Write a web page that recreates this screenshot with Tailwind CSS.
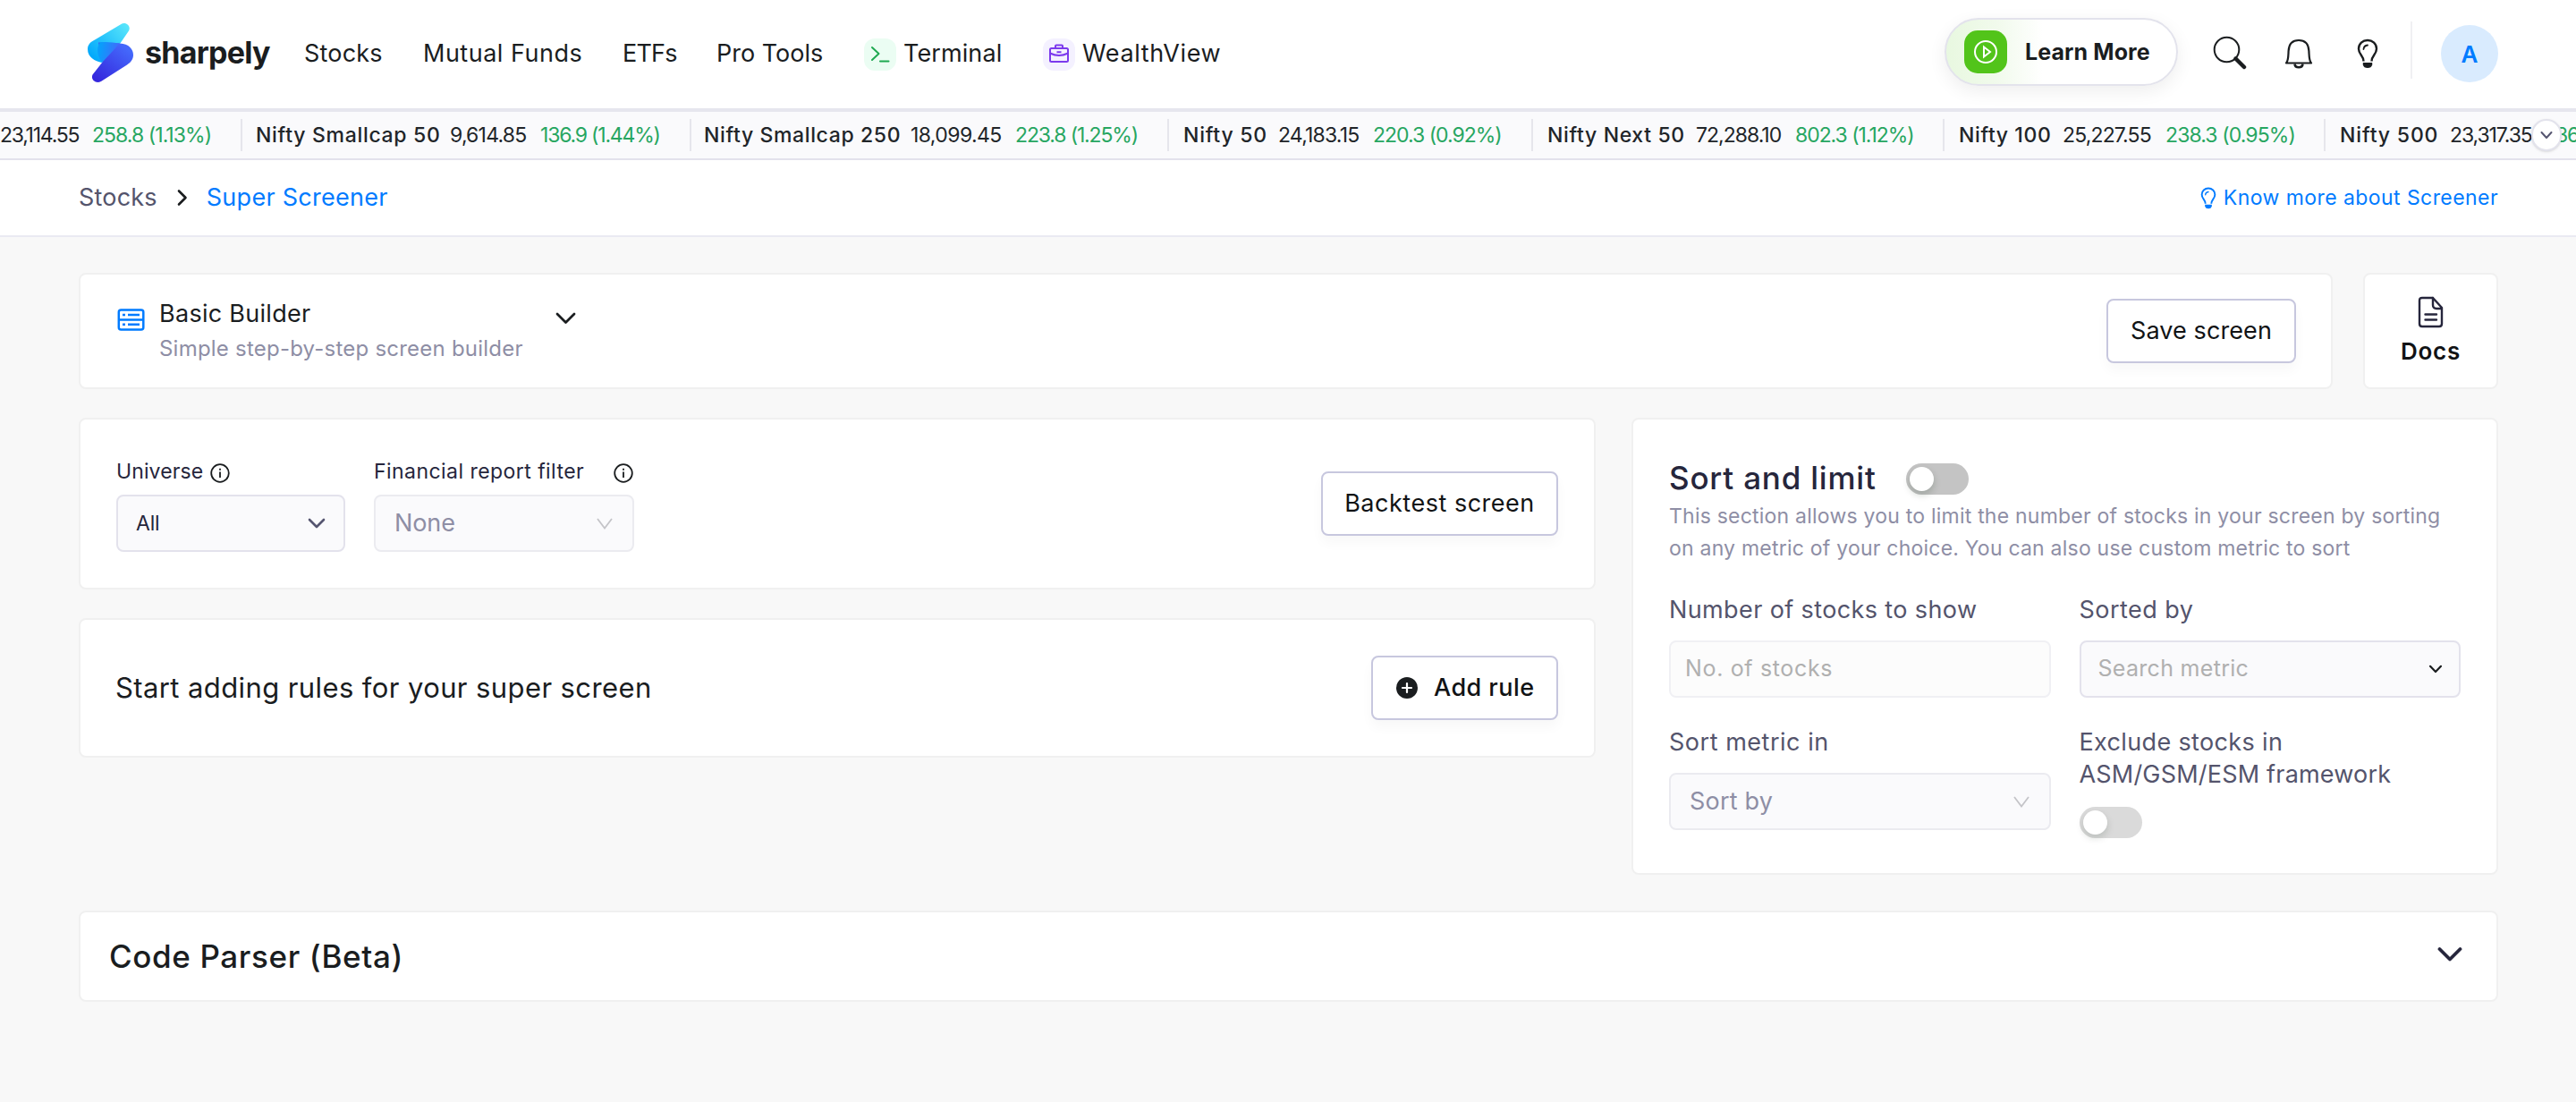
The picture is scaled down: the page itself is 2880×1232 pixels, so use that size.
<!DOCTYPE html>
<html lang="en">

<head>
    <meta charset="UTF-8">
    <meta name="viewport" content="width=device-width, initial-scale=1.0">
    <title>Super Screener - sharpely</title>
    <script src="https://cdn.jsdelivr.net/npm/@tailwindcss/browser@4"></script>
</head>

<body class="bg-[#f8f8f8] font-['Inter','DejaVu_Sans',sans-serif] text-[#1a1d1f] whitespace-nowrap overflow-x-hidden min-h-screen">

    <!-- Navbar -->
    <header class="h-[121px] bg-white flex items-center justify-between pl-[98px] pr-[87px]">
        <div class="flex items-center h-[119px] text-[27px]">
            <a class="flex items-center w-[242px]">
                <svg class="w-[52px] h-[68px] mb-[4px]" viewBox="0 0 52 68" fill="none">
                    <defs>
                        <linearGradient id="top" x1="42" y1="3" x2="5" y2="38" gradientUnits="userSpaceOnUse">
                            <stop stop-color="#56e4fb" />
                            <stop offset="1" stop-color="#03a9fb" />
                        </linearGradient>
                        <linearGradient id="bottom" x1="42" y1="28" x2="12" y2="66" gradientUnits="userSpaceOnUse">
                            <stop stop-color="#4468fb" />
                            <stop offset="1" stop-color="#3527dd" />
                        </linearGradient>
                        <linearGradient id="fold" x1="14" y1="30" x2="36" y2="34" gradientUnits="userSpaceOnUse">
                            <stop stop-color="#0a9dfb" />
                            <stop offset="1" stop-color="#4666fb" />
                        </linearGradient>
                    </defs>
                    <path d="M37 2.2C42-1.5 49 3.5 46 9.500L36 24L16 45C8 43.500 0 39 0 30C0 25 3 22 8 19.500Z" fill="url(#top)" />
                    <path d="M12 22.500L36 23.500C46 24 51 30 51 36.500C51 41 48.500 44.500 44 47.500L15 66C9 69 3 64 5.500 58.500L16.500 44.500Z" fill="url(#bottom)" />
                    <path d="M14 22.300C22 21.500 28 22.500 36 23.500L16.500 44.500C11 40 9 28 14 22.300Z" fill="url(#fold)" />
                </svg>
                <span class="text-[34px] font-bold tracking-[-0.75px] ml-[12px] mb-[4px]">sharpely</span>
            </a>
            <a class="w-[133px] tracking-[0.2px]">Stocks</a>
            <a class="w-[223px] tracking-[0.5px]">Mutual Funds</a>
            <a class="w-[105px] tracking-[-0.8px]">ETFs</a>
            <a class="w-[165px] tracking-[0px]">Pro Tools</a>
            <a class="w-[200px] flex items-center tracking-[0.1px]">
                <svg class="w-[36px] h-[36px] mr-[8px] rounded-[12px] bg-[#ebfdf3]" viewBox="0 0 36 36" fill="none" stroke="#1fa951" stroke-width="2" stroke-linecap="round" stroke-linejoin="round">
                    <path d="M9 10l7.500 7L9 24M18 25.500h9.500" />
                </svg>
                Terminal
            </a>
            <a class="flex items-center tracking-[0.6px]">
                <svg class="w-[36px] h-[36px] mr-[8px] rounded-[12px] bg-[#f4f1ff]" viewBox="0 0 36 36" fill="none" stroke="#7c3aed" stroke-width="2" stroke-linejoin="round">
                    <rect x="8" y="11" width="20" height="15" rx="1.500" />
                    <path d="M14 11V8.500q0-1 1-1h6q1 0 1 1V11M8 16.500q10 5 20 0" />
                    <path d="M15.500 15.200h5" />
                </svg>
                WealthView
            </a>
        </div>

        <div class="flex items-center h-[121px]">
            <button class="w-[261px] h-[76px] mb-[5px] rounded-full border-2 border-[#e3e3ec] bg-[linear-gradient(90deg,#e8f8e0_0%,#f1faec_22%,#ffffff_42%)] shadow-[0_6px_20px_rgba(0,0,0,0.07)] flex items-center pl-[20px]">
                <svg class="w-[48px] h-[48px] rounded-[15px] bg-[#52c41a]" viewBox="0 0 48 48" fill="none" stroke="#fff" stroke-width="2">
                    <circle cx="24" cy="24" r="12" />
                    <path d="M22 18.500v11l7-5.500z" />
                </svg>
                <span class="text-[25px] font-bold ml-[20px] mt-[2px] tracking-[0.1px]">Learn More</span>
            </button>
            <svg class="w-[38px] h-[38px] ml-[39px] mb-[4px]" viewBox="0 0 38 38" fill="none" stroke="#1a1d1f">
                <circle cx="15.500" cy="15.500" r="13.800" stroke-width="2" />
                <path d="M25.500 25.500l9.500 9.500" stroke-width="4.500" stroke-linecap="round" />
            </svg>
            <svg class="w-[32px] h-[34px] ml-[42px] mb-[1px]" viewBox="0 0 32 34" fill="none" stroke="#1a1d1f" stroke-width="2.200" stroke-linejoin="round">
                <path d="M2 27.500C4.500 25 4.300 20 4.600 14C5 6.500 9 2 16 2S27 6.500 27.400 14C27.700 20 27.500 25 30 27.500Z" />
                <path d="M11.500 28.500C12 33.500 20 33.500 20.500 28.500" stroke-width="2.600" />
            </svg>
            <svg class="w-[24px] h-[34px] ml-[49px] mb-[1px]" viewBox="0 0 24 34" fill="none" stroke="#1a1d1f" stroke-width="2.400">
                <path d="M7.500 25.500C7.500 19 2 18 2 11.500C2 6 6.500 2 12 2S22 6 22 11.500C22 18 16.500 19 16.500 25.500" />
                <path d="M7.500 12Q7.800 8 12 7.500" stroke-width="1.800" stroke-linecap="round" />
                <path d="M6.800 27h10.400v2.500q-1 3.500-5.200 3.500t-5.200-3.500z" fill="#1a1d1f" stroke="none" />
            </svg>
            <div class="w-[2px] h-[64px] bg-[#f0f0f3] ml-[36px] mb-[9px]"></div>
            <div class="w-[64px] h-[64px] rounded-full bg-[#d9ebfe] text-[#007bff] text-[26px] font-semibold flex items-center justify-center ml-[32px] mb-[1px]">A</div>
        </div>
    </header>

    <!-- Index ticker -->
    <div class="relative h-[58px] bg-[#fafafc] border-t-4 border-b-2 border-t-[#e6e6ee] border-b-[#e3e2ec] flex items-center overflow-hidden text-[23px] text-[#212529]">
        <div class="flex items-center h-[36px] w-[271px] shrink-0 border-r-2 border-[#e6e6ec]">
            <span class="w-[103px] tracking-[-1.25px]">23,114.55</span>
            <span class="text-[#27a661] tracking-[-0.95px]">258.8 (1.13%)</span>
        </div>
        <div class="flex items-center h-[36px] w-[502px] shrink-0 border-r-2 border-[#e6e6ec] pl-[15px]">
            <span class="w-[217px] font-medium tracking-[0.7px]">Nifty Smallcap 50</span>
            <span class="w-[101px] tracking-[-0.8px]">9,614.85</span>
            <span class="text-[#27a661] tracking-[-1.2px]">136.9 (1.44%)</span>
        </div>
        <div class="flex items-center h-[36px] w-[534px] shrink-0 border-r-2 border-[#e6e6ec] pl-[14px]">
            <span class="w-[231px] font-medium tracking-[0.63px]">Nifty Smallcap 250</span>
            <span class="w-[117px] tracking-[-0.6px]">18,099.45</span>
            <span class="text-[#27a661] tracking-[-1.15px]">223.8 (1.25%)</span>
        </div>
        <div class="flex items-center h-[36px] w-[407px] shrink-0 border-r-2 border-[#e6e6ec] pl-[16px]">
            <span class="w-[106px] font-medium tracking-[0.75px]">Nifty 50</span>
            <span class="w-[106px] tracking-[-0.8px]">24,183.15</span>
            <span class="text-[#27a661] tracking-[-1px]">220.3 (0.92%)</span>
        </div>
        <div class="flex items-center h-[36px] w-[460px] shrink-0 border-r-2 border-[#e6e6ec] pl-[16px]">
            <span class="w-[166px] font-medium tracking-[0.65px]">Nifty Next 50</span>
            <span class="w-[111px] tracking-[-1px]">72,288.10</span>
            <span class="text-[#27a661] tracking-[-1.05px]">802.3 (1.12%)</span>
        </div>
        <div class="flex items-center h-[36px] w-[426px] shrink-0 border-r-2 border-[#e6e6ec] pl-[16px]">
            <span class="w-[116px] font-medium tracking-[0.6px]">Nifty 100</span>
            <span class="w-[115px] tracking-[-0.85px]">25,227.55</span>
            <span class="text-[#27a661] tracking-[-0.9px]">238.3 (0.95%)</span>
        </div>
        <div class="flex items-center h-[36px] w-[430px] shrink-0 pl-[16px]">
            <span class="w-[123px] font-medium tracking-[0.85px]">Nifty 500</span>
            <span class="w-[105px] tracking-[-1.1px]">23,317.35</span>
            <span class="text-[#27a661] tracking-[-1.1px]">236.1 (1.02%)</span>
        </div>
        <button class="absolute top-[8px] right-[16px] w-[34px] h-[36px] rounded-full bg-white border-2 border-[#e3e3ec] shadow-sm flex items-center justify-center">
            <svg class="w-[14px] h-[10px]" viewBox="0 0 14 10" fill="none" stroke="#555570" stroke-width="2" stroke-linecap="round" stroke-linejoin="round">
                <path d="M1.500 2L7 8l5.500-6" />
            </svg>
        </button>
    </div>

    <!-- Breadcrumb -->
    <div class="h-[86px] bg-white border-b-2 border-[#eaeaf2] flex items-center justify-between pl-[88px] pr-[87px]">
        <div class="flex items-center text-[27px]">
            <span class="text-[#54546c] tracking-[0.2px]">Stocks</span>
            <svg class="w-[12px] h-[20px] ml-[22px] mr-[21px]" viewBox="0 0 12 20" fill="none" stroke="#1a1d1f" stroke-width="2.600" stroke-linecap="round" stroke-linejoin="round">
                <path d="M2 2.500L9.500 10L2 17.500" />
            </svg>
            <span class="text-[#007bff] tracking-[0.27px]">Super Screener</span>
        </div>
        <a class="flex items-center text-[23px] text-[#007bff] tracking-[0.43px]">
            <svg class="w-[18px] h-[25px] mr-[8px]" viewBox="0 0 24 34" fill="none" stroke="#007bff" stroke-width="2.600">
                <path d="M7.500 25.500C7.500 19 2 18 2 11.500C2 6 6.500 2 12 2S22 6 22 11.500C22 18 16.500 19 16.500 25.500" />
                <path d="M7.500 12Q7.800 8 12 7.500" stroke-width="1.800" stroke-linecap="round" />
                <path d="M6.800 27h10.400v2.500q-1 3.500-5.200 3.500t-5.200-3.500z" fill="#007bff" stroke="none" />
            </svg>
            Know more about Screener
        </a>
    </div>

    <main class="pl-[88px] pr-[87px] pt-[40px]">

        <!-- Builder type -->
        <div class="flex gap-[34px] h-[130px]">
            <div class="flex-1 bg-white border-2 border-[#f0f0f0] rounded-lg flex items-center justify-between pl-[41px] pr-[39px]">
                <div class="flex w-[520px] h-[90px]">
                    <svg class="w-[31px] h-[25px] mt-[20px]" viewBox="0 0 31 25" fill="none" stroke="#007bff" stroke-width="2.500">
                        <rect x="1.800" y="1.500" width="27.500" height="22" rx="2.500" />
                        <path d="M1.800 12.500h27.500M6 7h3M12 7h13M6 17.800h3M12 17.800h13" />
                    </svg>
                    <div class="ml-[16px] mt-[8px] w-[442px]">
                        <p class="text-[27px] leading-[36px] tracking-[0.28px] text-[#1a1d1f]">Basic Builder</p>
                        <p class="text-[24px] leading-[36px] mt-[3px] tracking-[0.22px] text-[#8e8ea5]">Simple step-by-step screen builder</p>
                    </div>
                    <svg class="w-[24px] h-[14px] mt-[24px] shrink-0" viewBox="0 0 24 14" fill="none" stroke="#1a1d1f" stroke-width="2.800" stroke-linecap="round" stroke-linejoin="round">
                        <path d="M3 2l9.500 9.500L22 2" />
                    </svg>
                </div>
                <button class="w-[212px] h-[72px] bg-white border-2 border-[#c7c7de] rounded-lg shadow-[0_8px_14px_rgba(0,0,0,0.03)] text-[27px] tracking-[0.1px] text-[#111315]">Save screen</button>
            </div>
            <div class="w-[151px] bg-white border-2 border-[#f0f0f0] rounded-lg flex flex-col items-center pt-[24px]">
                <svg class="w-[30px] h-[36px]" viewBox="0 0 30 36" fill="none" stroke="#26263c" stroke-width="2.400" stroke-linejoin="round" stroke-linecap="round">
                    <path d="M17 2H5q-3 0-3 3v26q0 3 3 3h19q3 0 3-3V13L17 2v8q0 4 4 4h6" />
                    <path d="M8.500 20.500h12.500M8.500 26.500h12.500" />
                </svg>
                <span class="text-[26px] leading-[36px] font-semibold tracking-[0.7px] mt-[8px] text-[#111315]">Docs</span>
            </div>
        </div>

        <div class="flex items-start gap-[40px] mt-[32px]">
            <div class="w-[1696px]">
                <!-- Universe and report filter -->
                <div class="h-[192px] bg-white border-2 border-[#f0f0f0] rounded-lg flex justify-between pl-[40px] pr-[40px]">
                    <div class="flex gap-[32px] pt-[41px]">
                        <div class="w-[256px]">
                            <div class="flex items-center h-[34px] text-[23px] text-[#26263c]">
                                <span class="tracking-[0.1px]">Universe</span>
                                <svg class="w-[22px] h-[22px] ml-[8px] mt-[4px]" viewBox="0 0 22 22" fill="none" stroke="#1a1d1f" stroke-width="1.800">
                                    <circle cx="11" cy="11" r="9.800" />
                                    <path d="M11 9.500v6.500M11 5.800v2" />
                                </svg>
                            </div>
                            <div class="h-[64px] mt-[9px] bg-[#fafafc] border-2 border-[#e3e2ec] rounded-lg flex items-center justify-between pl-[20px] pr-[20px] text-[23px] text-[#26263c]">
                                <span class="tracking-[-0.2px]">All</span>
                                <svg class="w-[20px] h-[12px]" viewBox="0 0 20 12" fill="none" stroke="#555570" stroke-width="2.600" stroke-linecap="round" stroke-linejoin="round">
                                    <path d="M2 2l8 8 8-8" />
                                </svg>
                            </div>
                        </div>
                        <div class="w-[291px]">
                            <div class="flex items-center justify-between h-[34px] text-[23px] text-[#26263c]">
                                <span class="tracking-[0.45px]">Financial report filter</span>
                                <svg class="w-[22px] h-[22px] mr-[1px] mt-[4px]" viewBox="0 0 22 22" fill="none" stroke="#1a1d1f" stroke-width="1.800">
                                    <circle cx="11" cy="11" r="9.800" />
                                    <path d="M11 9.500v6.500M11 5.800v2" />
                                </svg>
                            </div>
                            <div class="h-[64px] mt-[9px] bg-[#fafafc] border-2 border-[#ebebf0] rounded-lg flex items-center justify-between pl-[21px] pr-[22px] text-[27px] text-[#8e8ea5]">
                                <span class="tracking-[-0.1px]">None</span>
                                <svg class="w-[18px] h-[13px]" viewBox="0 0 18 13" fill="none" stroke="#c4c4c8" stroke-width="1.800">
                                    <path d="M1 1l8 10.500L17 1" />
                                </svg>
                            </div>
                        </div>
                    </div>
                    <button class="w-[265px] h-[72px] mt-[58px] bg-white border-2 border-[#c7c7de] rounded-lg shadow-[0_8px_14px_rgba(0,0,0,0.03)] text-[27px] tracking-[0.52px] text-[#111315]">Backtest screen</button>
                </div>

                <!-- Rules -->
                <div class="h-[156px] mt-[32px] bg-white border-2 border-[#f0f0f0] rounded-lg flex items-center justify-between pl-[39px] pr-[40px]">
                    <p class="text-[31px] tracking-[0.4px]">Start adding rules for your super screen</p>
                    <button class="w-[209px] h-[72px] bg-white border-2 border-[#c7c7de] rounded-lg shadow-[0_8px_14px_rgba(0,0,0,0.03)] flex items-center pl-[26px] text-[27px] font-medium tracking-[0.45px] text-[#111315]">
                        <svg class="w-[24px] h-[24px] mr-[18px]" viewBox="0 0 24 24" fill="none" stroke="#fff" stroke-width="2.200" stroke-linecap="round">
                            <circle cx="12" cy="12" r="12" fill="#1a1d1f" stroke="none" />
                            <path d="M12 7v10M7 12h10" />
                        </svg>
                        Add rule
                    </button>
                </div>
            </div>

            <!-- Sort and limit -->
            <div class="flex-1 h-[511px] bg-white border-2 border-[#f0f0f0] rounded-lg pl-[40px] pr-[40px] pt-[41px]">
                <div class="flex items-center h-[48px]">
                    <h2 class="text-[35px] font-medium tracking-[0.8px] text-[#26263c] w-[265px]">Sort and limit</h2>
                    <div class="w-[70px] h-[35px] mt-[2px] rounded-full bg-[#c4c4c4] p-[4px]">
                        <div class="w-[27px] h-[27px] rounded-full bg-white shadow-[0_4px_8px_rgba(0,35,11,0.2)]"></div>
                    </div>
                </div>
                <p class="text-[23px] leading-[36px] tracking-[0.22px] text-[#8e8ea5] mt-[1px]">This section allows you to limit the number of stocks in your screen by sorting<br>on any metric of your choice. You can also use custom metric to sort</p>
                <div class="grid grid-cols-2 gap-x-[32px] mt-[33px] text-[27px] text-[#54546c]">
                    <div class="h-[148px]">
                        <p class="leading-[36px] tracking-[0.38px]">Number of stocks to show</p>
                        <div class="h-[64px] mt-[16px] bg-[#fcfcfc] border-2 border-[#f0f0f4] rounded-lg flex items-center pl-[16px] text-[25px] tracking-[0.65px] text-[#b0b0b0]">No. of stocks</div>
                    </div>
                    <div class="h-[148px]">
                        <p class="leading-[36px] tracking-[0.45px]">Sorted by</p>
                        <div class="h-[64px] mt-[16px] bg-[#fafafc] border-2 border-[#e3e2ec] rounded-lg flex items-center justify-between pl-[19px] pr-[18px] text-[25px] tracking-[0.3px] text-[#b0b0b0]">
                            Search metric
                            <svg class="w-[16px] h-[10px]" viewBox="0 0 16 10" fill="none" stroke="#1a1d1f" stroke-width="2.200" stroke-linecap="round" stroke-linejoin="round">
                                <path d="M2 1.800L8 8l6-6.200" />
                            </svg>
                        </div>
                    </div>
                    <div>
                        <p class="leading-[36px] tracking-[0.52px]">Sort metric in</p>
                        <div class="h-[64px] mt-[16px] bg-[#fafafc] border-2 border-[#ebebf0] rounded-lg flex items-center justify-between pl-[21px] pr-[22px] tracking-[0.2px] text-[#8e8ea5]">
                            Sort by
                            <svg class="w-[18px] h-[13px]" viewBox="0 0 18 13" fill="none" stroke="#c4c4c8" stroke-width="1.800">
                                <path d="M1 1l8 10.500L17 1" />
                            </svg>
                        </div>
                    </div>
                    <div>
                        <p class="leading-[36px]"><span class="tracking-[0.35px]">Exclude stocks in</span><br><span class="tracking-[0.2px]">ASM/GSM/ESM framework</span></p>
                        <div class="w-[70px] h-[35px] mt-[18px] rounded-full bg-[#dadada] p-[4px]">
                            <div class="w-[27px] h-[27px] rounded-full bg-white shadow-[0_4px_8px_rgba(0,35,11,0.15)]"></div>
                        </div>
                    </div>
                </div>
            </div>
        </div>

        <!-- Code parser -->
        <div class="h-[102px] mt-[40px] bg-white border-2 border-[#f0f0f0] rounded-lg flex items-center justify-between pl-[32px] pr-[38px]">
            <h2 class="text-[35px] font-medium tracking-[0.62px]">Code Parser (Beta)</h2>
            <svg class="w-[28px] h-[18px] mb-[5px]" viewBox="0 0 28 18" fill="none" stroke="#26263c" stroke-width="3.800" stroke-linecap="round" stroke-linejoin="round">
                <path d="M2.500 3L14 14.500 25.500 3" />
            </svg>
        </div>
    </main>
</body>

</html>
